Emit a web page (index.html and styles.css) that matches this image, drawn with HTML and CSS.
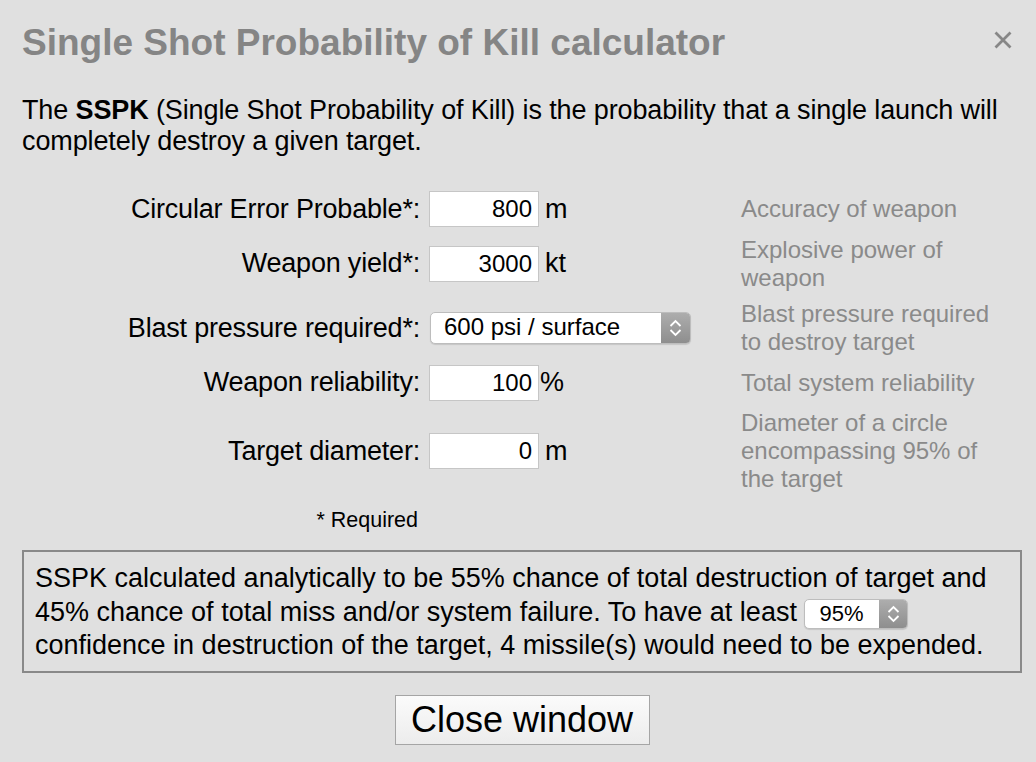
FILE: index.html
```html
<!DOCTYPE html>
<html>
<head>
<meta charset="utf-8">
<link rel="stylesheet" href="styles.css">
</head>
<body>
<div class="dialog">
  <div class="header">
    <h1 class="title">Single Shot Probability of Kill calculator</h1>
    <svg class="close-x" width="18" height="18" viewBox="0 0 18 18"><path d="M1.5 1.5 L16.5 16.5 M16.5 1.5 L1.5 16.5" stroke="#878787" stroke-width="2.8" fill="none"/></svg>
  </div>
  <p class="intro">The <b>SSPK</b> (Single Shot Probability of Kill) is the probability that a single launch will<br>completely destroy a given target.</p>

  <div class="form">
    <label class="lbl">Circular Error Probable*:</label>
    <div class="ctl"><input class="num" type="text" value="800"><span class="unit">m</span></div>
    <div class="hint">Accuracy of weapon</div>

    <label class="lbl">Weapon yield*:</label>
    <div class="ctl"><input class="num" type="text" value="3000"><span class="unit">kt</span></div>
    <div class="hint">Explosive power of weapon</div>

    <label class="lbl">Blast pressure required*:</label>
    <div class="ctl">
      <div class="select big">
        <span class="val">600 psi / surface</span>
        <span class="arr"><svg width="13" height="18" viewBox="0 0 13 18"><path d="M1.5 7 L6.5 2 L11.5 7 M1.5 11 L6.5 16 L11.5 11" stroke="#fff" stroke-width="1.8" fill="none"/></svg></span>
      </div>
    </div>
    <div class="hint">Blast pressure required to destroy target</div>

    <label class="lbl">Weapon reliability:</label>
    <div class="ctl"><input class="num" type="text" value="100"><span class="unit pct">%</span></div>
    <div class="hint">Total system reliability</div>

    <label class="lbl">Target diameter:</label>
    <div class="ctl"><input class="num" type="text" value="0"><span class="unit">m</span></div>
    <div class="hint">Diameter of a circle encompassing 95% of the target</div>

    <div class="req">* Required</div>
  </div>

  <div class="result">SSPK calculated analytically to be 55% chance of total destruction of target and<br>45% chance of total miss and/or system failure. To have at least <span class="select small"><span class="val">95%</span><span class="arr"><svg width="13" height="18" viewBox="0 0 13 18"><path d="M1.5 7 L6.5 2 L11.5 7 M1.5 11 L6.5 16 L11.5 11" stroke="#fff" stroke-width="1.8" fill="none"/></svg></span></span><br>confidence in destruction of the target, 4 missile(s) would need to be expended.</div>

  <div class="btnrow"><button class="closebtn">Close window</button></div>
</div>
</body>
</html>
```

FILE: styles.css
```css
* { box-sizing: border-box; }
html, body { margin: 0; padding: 0; }
body {
  background: #e0e0e0;
  font-family: "Liberation Sans", Arial, Helvetica, sans-serif;
  color: #000;
  width: 1036px;
  height: 762px;
  overflow: hidden;
}
.dialog { width: 1000px; margin-left: 22px; }
.header {
  display: flex;
  justify-content: space-between;
  align-items: flex-start;
  padding-top: 21px;
}
.title {
  margin: 0;
  font-size: 37px;
  line-height: 43px;
  font-weight: bold;
  color: #858585;
}
.close-x { margin-top: 10px; margin-right: 10px; }
.intro {
  margin: 31px 0 0;
  font-size: 27px;
  line-height: 31px;
  letter-spacing: -0.12px;
}
.intro b { font-weight: bold; }
.form {
  display: grid;
  grid-template-columns: 398px 303px 260px;
  column-gap: 9px;
  row-gap: 8.5px;
  align-items: center;
  margin-top: 34px;
}
.lbl {
  font-size: 27px;
  line-height: 31px;
  text-align: right;
  letter-spacing: -0.2px;
}
.ctl { display: flex; align-items: center; }
.num {
  width: 110px;
  height: 36px;
  margin: 0;
  border: 1px solid #c6c6c6;
  border-radius: 0;
  background: #fff;
  font-family: "Liberation Sans", Arial, sans-serif;
  font-size: 24px;
  color: #000;
  text-align: right;
  padding: 0 6px 0 4px;
  outline: none;
}
.unit { font-size: 27px; line-height: 31px; margin-left: 6px; }
.unit.pct { margin-left: 1px; }
.hint {
  font-size: 24px;
  line-height: 28px;
  color: #8a8a8a;
}
.req {
  grid-column: 1;
  font-size: 21.5px;
  line-height: 36px;
  text-align: right;
  padding-right: 2px;
}
.select {
  display: inline-flex;
  align-items: stretch;
  border: 1px solid #bdbdbd;
  border-radius: 5px;
  background: #fff;
  overflow: hidden;
  box-shadow: 0 1px 1px rgba(0, 0, 0, 0.12);
}
.select .val {
  flex: 1;
  display: flex;
  align-items: center;
}
.select .arr {
  width: 29px;
  background: linear-gradient(#adadad, #8e8e8e);
  display: flex;
  align-items: center;
  justify-content: center;
}
.select.big {
  width: 261px;
  height: 32px;
  margin-left: 1px;
}
.select.big .val {
  font-size: 24px;
  padding-left: 13px;
  padding-bottom: 3px;
}
.select.small {
  width: 104px;
  height: 30px;
  line-height: normal;
}
.select.small .val {
  font-size: 22px;
  padding-left: 14px;
}
.select.small .arr { width: 28px; }
.result {
  margin-top: 12.5px;
  border: 2px solid #898989;
  padding: 10px 11px 8px;
  font-size: 27px;
  line-height: 33.5px;
}
.btnrow {
  display: flex;
  justify-content: center;
  margin-top: 22.5px;
}
.closebtn {
  width: 255px;
  height: 50px;
  margin: 0;
  padding: 0;
  border: 1px solid #a5a5a5;
  border-radius: 0;
  background: linear-gradient(#fbfbfb, #ececec);
  font-family: "Liberation Sans", Arial, sans-serif;
  font-size: 36px;
  color: #000;
}
```
